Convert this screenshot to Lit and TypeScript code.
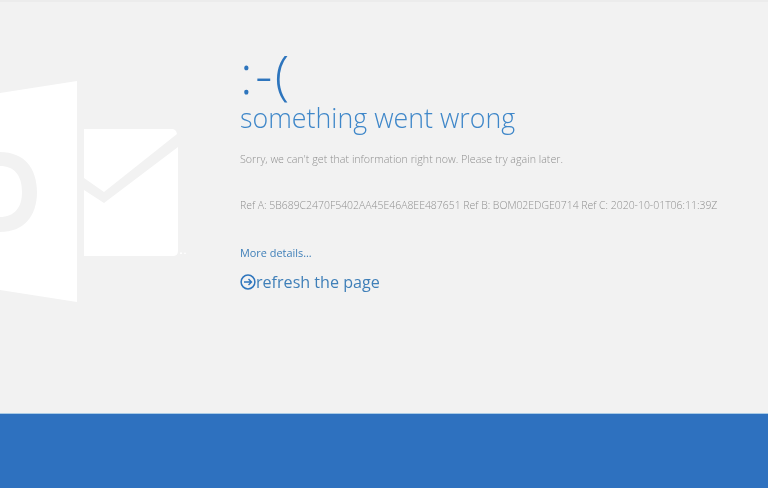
import { LitElement, html, css } from "lit";
import { customElement } from "lit/decorators.js";

@customElement("app-root")
export class AppRoot extends LitElement {
  static styles = css`
    :host { display: flex; flex-direction: column; width: 768px; height: 488px; overflow: hidden; background: #f2f2f2; font-family: "Open Sans", "Noto Sans", sans-serif; position: relative; }
    .topline { height: 2px; background: #ececec; flex: none; }
    .logo { position: absolute; left: 0; top: 0; width: 200px; height: 320px; filter: blur(0.5px); }
    .main { flex: 1; display: flex; flex-direction: column; align-items: flex-start; padding: 50px 0 0 240px; position: relative; filter: blur(0.3px); }
    .emoji { font-size: 53px; line-height: 44px; height: 44px; margin-bottom: 3px; font-weight: 300; color: #2e75bd; letter-spacing: 2.500px; }
    h1 { margin: 0; font-size: 26.800px; line-height: 38px; font-weight: 300; color: #3f87c9; }
    .msg { margin: 14px 0 0; font-size: 10.700px; line-height: 16px; font-weight: 300; color: #8f8f8f; white-space: nowrap; }
    .ref { margin: 30px 0 0; font-size: 10.450px; line-height: 16px; font-weight: 300; color: #8f8f8f; white-space: nowrap; }
    .more { margin-top: 32px; font-size: 10.900px; line-height: 16px; color: #3f7fb8; }
    .refresh { margin-top: 9px; display: flex; align-items: center; font-size: 16.100px; line-height: 24px; color: #3f7fb8; }
    .refresh svg { width: 16px; height: 16px; flex: none; }
    .band { flex: none; height: 75px; background: #2e71bf; border-top: 1px solid #a9cbe6; box-sizing: border-box; }
  `;

  render() {
    return html`
      <div class="topline"></div>
      <svg class="logo" viewBox="0 0 200 320" aria-hidden="true">
        <path fill="#fff" fill-rule="evenodd" d="M0 93 L77 81 V302 L0 290 Z M0 152 C24 152 37 168 37 192 C37 216 24 232 0 232 Z M0 166 V217 C14 217 22 208 22 192 C22 175 14 166 0 166 Z"/>
        <path fill="#fff" d="M84 129 H172 Q176 129 177 134 L104 192 L84 178 Z"/>
        <path fill="#fff" d="M84 190 L104 203 L178 147 V251 Q178 256 173 256 H84 Z"/>
        <path fill="#fff" d="M180 252.500h2v1.500h-2zM184 252.800h2v1h-2z"/>
      </svg>
      <div class="main">
        <div class="emoji">:-(</div>
        <h1>something went wrong</h1>
        <p class="msg">Sorry, we can't get that information right now. Please try again later.</p>
        <p class="ref">Ref A: 5B689C2470F5402AA45E46A8EE487651 Ref B: BOM02EDGE0714 Ref C: 2020-10-01T06:11:39Z</p>
        <div class="more">More details...</div>
        <div class="refresh">
          <svg viewBox="0 0 16 16" fill="none" stroke="#2e75bd" aria-hidden="true">
            <circle cx="8" cy="8" r="6.900" stroke-width="1.500"/>
            <path d="M4 8H11.500M8.500 5L11.500 8L8.500 11" stroke-width="1.400"/>
          </svg>
          <span>refresh the page</span>
        </div>
      </div>
      <div class="band"></div>
    `;
  }
}
